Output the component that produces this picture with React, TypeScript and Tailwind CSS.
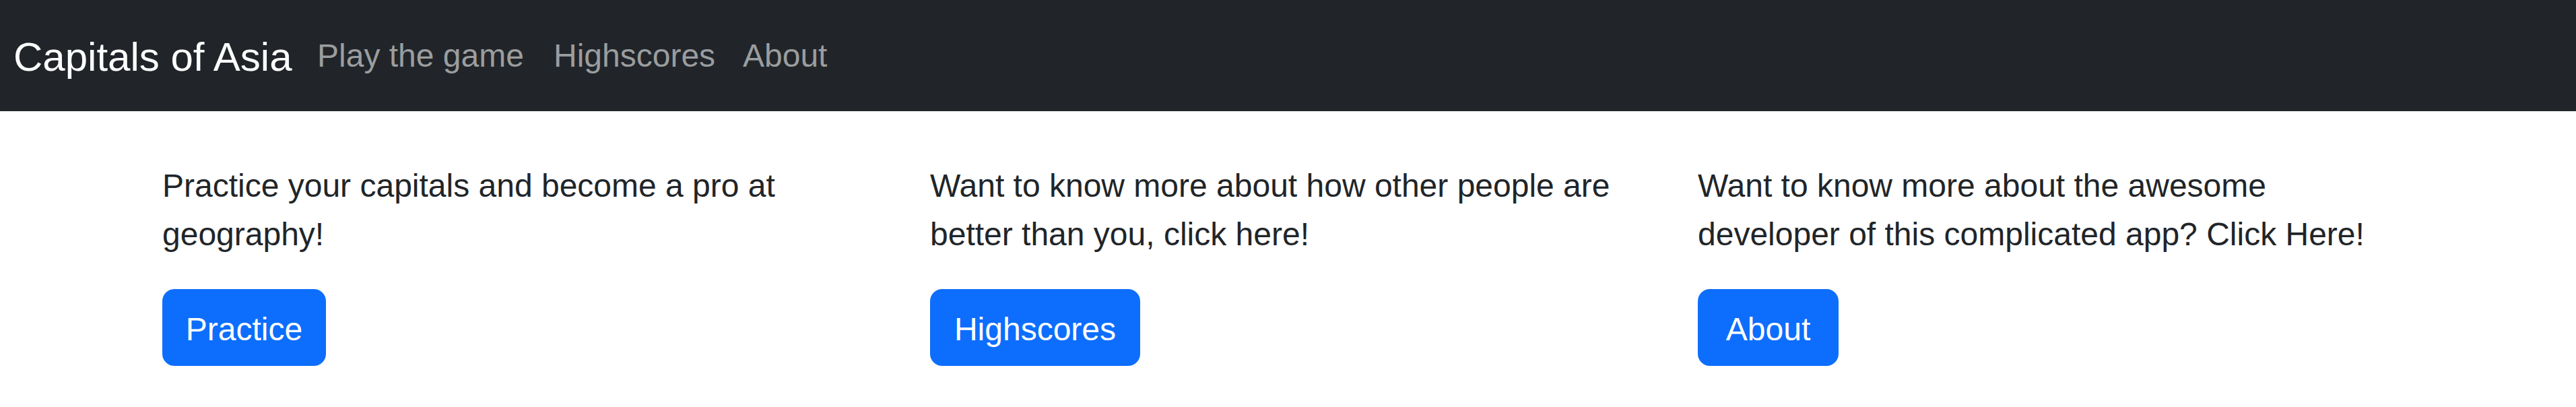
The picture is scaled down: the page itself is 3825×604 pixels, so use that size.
const font = { fontFamily: '"Liberation Sans", Arial, sans-serif' };

const links = [
  { label: 'Play the game', width: 'w-[351px]' },
  { label: 'Highscores', width: 'w-[281px]' },
  { label: 'About', width: 'w-[200px]' },
];

const cards = [
  {
    text: 'Practice your capitals and become a pro at geography!',
    button: 'Practice',
    width: 'w-[243px]',
  },
  {
    text: 'Want to know more about how other people are better than you, click here!',
    button: 'Highscores',
    width: 'w-[312px]',
  },
  {
    text: 'Want to know more about the awesome developer of this complicated app? Click Here!',
    button: 'About',
    width: 'w-[209px]',
  },
];

function Navbar() {
  return (
    <nav className="h-[165px] bg-[#212529] flex items-center pl-[20px]">
      <a href="#" className="w-[451px] pt-[5px] text-[60px] leading-[90px] text-white whitespace-nowrap">
        Capitals of Asia
      </a>
      {links.map((l) => (
        <a
          key={l.label}
          href="#"
          className={`${l.width} text-[48px] leading-[72px] text-[#9b9d9f] whitespace-nowrap`}
        >
          {l.label}
        </a>
      ))}
    </nav>
  );
}

export default function App() {
  return (
    <div style={font} className="bg-white min-h-[604px] text-[#212529]">
      <Navbar />
      <main className="ml-[205px] w-[3420px] pt-[75px] grid grid-cols-3">
        {cards.map((c) => (
          <div key={c.button} className="px-[36px]">
            <p className="w-[1050px] text-[48px] leading-[72px] mb-[45px]">{c.text}</p>
            <button
              className={`${c.width} h-[114px] pt-[6px] flex items-center justify-center rounded-[18px] bg-[#0d6efd] text-white text-[48px] leading-[72px]`}
            >
              {c.button}
            </button>
          </div>
        ))}
      </main>
    </div>
  );
}
